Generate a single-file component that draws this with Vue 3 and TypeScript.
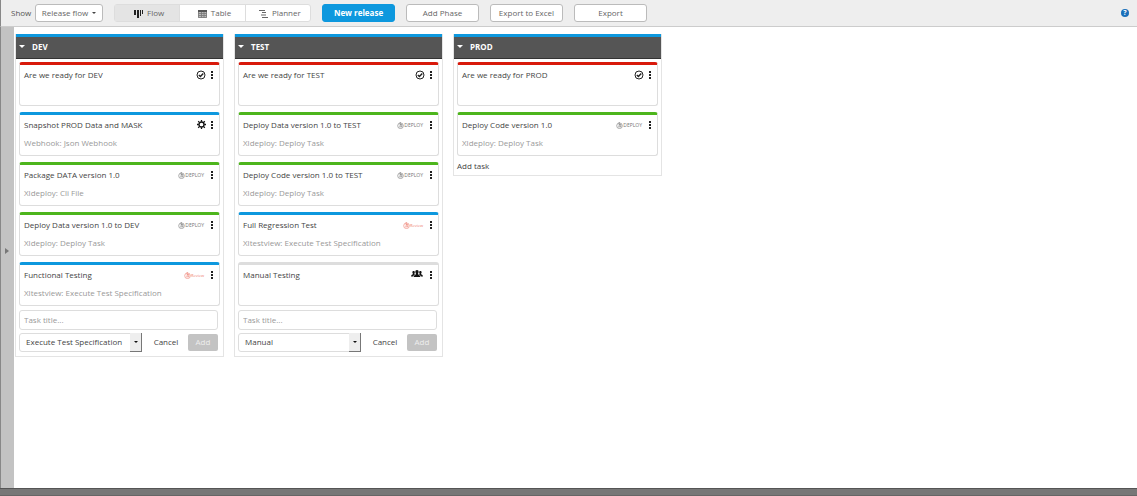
<script setup lang="ts">
import { ref } from 'vue'

type Accent = 'red' | 'blue' | 'green' | 'grey'
type Icon = 'check' | 'gear' | 'deploy' | 'review' | 'users'

interface Task {
  title: string
  type?: string
  accent: Accent
  icon: Icon
}

interface Phase {
  name: string
  tasks: Task[]
  form?: string
}

const phases: Phase[] = [
  {
    name: 'DEV',
    tasks: [
      { title: 'Are we ready for DEV', accent: 'red', icon: 'check' },
      { title: 'Snapshot PROD Data and MASK', type: 'Webhook: Json Webhook', accent: 'blue', icon: 'gear' },
      { title: 'Package DATA version 1.0', type: 'Xldeploy: Cli File', accent: 'green', icon: 'deploy' },
      { title: 'Deploy Data version 1.0 to DEV', type: 'Xldeploy: Deploy Task', accent: 'green', icon: 'deploy' },
      { title: 'Functional Testing', type: 'Xltestview: Execute Test Specification', accent: 'blue', icon: 'review' },
    ],
    form: 'Execute Test Specification',
  },
  {
    name: 'TEST',
    tasks: [
      { title: 'Are we ready for TEST', accent: 'red', icon: 'check' },
      { title: 'Deploy Data version 1.0 to TEST', type: 'Xldeploy: Deploy Task', accent: 'green', icon: 'deploy' },
      { title: 'Deploy Code version 1.0 to TEST', type: 'Xldeploy: Deploy Task', accent: 'green', icon: 'deploy' },
      { title: 'Full Regression Test', type: 'Xltestview: Execute Test Specification', accent: 'blue', icon: 'review' },
      { title: 'Manual Testing', accent: 'grey', icon: 'users' },
    ],
    form: 'Manual',
  },
  {
    name: 'PROD',
    tasks: [
      { title: 'Are we ready for PROD', accent: 'red', icon: 'check' },
      { title: 'Deploy Code version 1.0', type: 'Xldeploy: Deploy Task', accent: 'green', icon: 'deploy' },
    ],
  },
]

const taskTypes = ['Execute Test Specification', 'Manual']
const views = ['Flow', 'Table', 'Planner']
const activeView = ref('Flow')
</script>

<template>
  <div class="page">
    <header class="toolbar">
      <span class="show">Show</span>
      <button class="btn dropdown" type="button">Release flow <i class="caret"></i></button>
      <div class="views">
        <button
          v-for="view in views"
          :key="view"
          type="button"
          class="view"
          :class="{ active: view === activeView }"
          @click="activeView = view"
        >
          <svg v-if="view === 'Flow'" width="9" height="9" viewBox="0 0 9 9" aria-hidden="true">
            <path d="M0 1h2v5H0zM3 1h2v8H3zM6 1h1v6H6zM8 1h1v4H8z" fill="#222" />
          </svg>
          <svg v-else-if="view === 'Table'" width="9" height="9" viewBox="0 0 9 9" aria-hidden="true">
            <path d="M0 1h9v8H0z" fill="#bbb" />
            <path d="M.5 1.500h8v7h-8zM.5 4.500h8M.5 6.500h8M3.500 2v6.500M6 2v6.500" fill="none" stroke="#777" stroke-width=".8" />
            <path d="M0 1h9v2H0z" fill="#555" />
          </svg>
          <svg v-else width="9" height="9" viewBox="0 0 9 9" aria-hidden="true">
            <path d="M0 1.500h6M3 3.500h4M2 6h5M3 8.500h6" stroke="#666" />
          </svg>
          {{ view }}
        </button>
      </div>
      <button class="btn action primary" type="button">New release</button>
      <button class="btn action" type="button">Add Phase</button>
      <button class="btn action" type="button">Export to Excel</button>
      <button class="btn action" type="button">Export</button>
      <button class="help" type="button" aria-label="Help">?</button>
    </header>

    <div class="body">
      <aside class="rail">
        <button class="expand" type="button" aria-label="Expand panel"></button>
      </aside>
      <main class="board">
        <section v-for="phase in phases" :key="phase.name" class="phase">
          <h2 class="phase-head"><i class="fold"></i>{{ phase.name }}</h2>
          <div class="phase-body">
            <article v-for="task in phase.tasks" :key="task.title" class="task" :class="task.accent">
              <div class="task-row">
                <span class="title">{{ task.title }}</span>
                <svg v-if="task.icon === 'check'" width="10" height="10" viewBox="0 0 10 10" aria-hidden="true">
                  <circle cx="5" cy="5" r="4" fill="none" stroke="#222" />
                  <path d="M2.800 5l1.600 1.600L7.300 3.500" fill="none" stroke="#222" stroke-width="1.400" />
                </svg>
                <svg v-else-if="task.icon === 'gear'" class="gear" width="9" height="11" viewBox="0 0 9 11" aria-hidden="true">
                  <circle cx="4.500" cy="4.500" r="2.500" fill="none" stroke="#111" stroke-width="1.300" />
                  <path d="M4.500 0v1.800M4.500 7.200V9M0 4.500h1.800M7.200 4.500H9M1.200 1.200l1.400 1.400M6.400 6.400l1.400 1.400M7.800 1.200L6.400 2.600M2.600 6.400L1.200 7.800" stroke="#111" stroke-width="1.300" />
                </svg>
                <svg v-else-if="task.icon === 'users'" class="users" width="12" height="10" viewBox="0 0 12 10" aria-hidden="true">
                  <path d="M6 0c1.200 0 1.700.8 1.600 1.900C7.500 3 7 3.300 7 4c.2.900 2.200.9 2.300 3H2.700C2.800 4.900 4.800 4.900 5 4c0-.7-.5-1-.6-2.100C4.300.8 4.800 0 6 0z" fill="#111" />
                  <path d="M2.600 1c1 0 1.300.7 1.200 1.500-.1.700-.4.900-.4 1.400l.6.500C2.800 5 2.300 5.500 2.200 6.500H0c0-1.700 1.700-1.800 1.900-2.500 0-.6-.4-.8-.5-1.500C1.300 1.700 1.600 1 2.600 1zM9.400 1c-1 0-1.300.7-1.200 1.500.1.700.4.900.4 1.400l-.6.500c1.200.6 1.700 1.100 1.800 2.100H12c0-1.700-1.700-1.800-1.900-2.500 0-.6.4-.8.5-1.500.1-.8-.2-1.500-1.200-1.500z" fill="#111" />
                </svg>
                <span v-else class="brand" :class="task.icon">
                  <svg width="7" height="7" viewBox="0 0 7 7" aria-hidden="true">
                    <circle cx="3.500" cy="3.800" r="2.800" fill="none" stroke="currentColor" stroke-width=".6" />
                    <path d="M3.200 0v4M3.200 2.500h1.600v2.300H2.200" fill="none" stroke="currentColor" stroke-width=".7" />
                  </svg>{{ task.icon === 'deploy' ? 'DEPLOY' : 'Review' }}
                </span>
                <button class="menu" type="button" aria-label="Task menu"><i></i><i></i><i></i></button>
              </div>
              <p v-if="task.type" class="type">{{ task.type }}</p>
            </article>

            <form v-if="phase.form" class="add-form" @submit.prevent>
              <input type="text" placeholder="Task title..." aria-label="Task title" />
              <div class="form-row">
                <div class="select">
                  <select aria-label="Task type" :value="phase.form">
                    <option v-for="option in taskTypes" :key="option">{{ option }}</option>
                  </select>
                  <span class="arrow"></span>
                </div>
                <button class="cancel" type="button">Cancel</button>
                <button class="add" type="submit" disabled>Add</button>
              </div>
            </form>
            <button v-else class="add-task" type="button">Add task</button>
          </div>
        </section>
      </main>
    </div>
    <footer class="edge"></footer>
  </div>
</template>

<style>
body {
  margin: 0;
}
</style>

<style scoped>
.page {
  display: flex;
  flex-direction: column;
  height: 100vh;
  overflow: hidden;
  box-sizing: border-box;
  background: #fff;
  color: #444;
  font: 8px/12px "Open Sans", sans-serif;
}
.page * {
  box-sizing: border-box;
}
button,
input,
select {
  margin: 0;
  padding: 0;
  border: 0;
  background: none;
  color: inherit;
  font: inherit;
}
.toolbar {
  display: flex;
  align-items: center;
  flex: none;
  height: 27px;
  padding: 0 8px 0 10px;
  border-bottom: 1px solid #ccc;
  border-left: 1px solid #888;
  background: #eee;
}
.show {
  width: 24px;
  color: #555;
}
.btn {
  height: 18px;
  border: 1px solid #bbb;
  border-radius: 3px;
  background: #fff;
  color: #666;
  text-align: center;
}
.dropdown {
  display: flex;
  align-items: center;
  justify-content: center;
  gap: 4px;
  width: 68px;
  margin-right: 11px;
}
.caret,
.fold {
  border: 2px solid transparent;
  border-top-color: #444;
  border-bottom: 0;
}
.views {
  display: flex;
  width: 197px;
  height: 18px;
  margin-right: 11px;
  border: 1px solid #ddd;
  border-radius: 3px;
  background: #fff;
}
.view {
  display: flex;
  flex: 1;
  align-items: center;
  justify-content: center;
  gap: 4px;
  padding-left: 4px;
  color: #666;
}
.view + .view {
  border-left: 1px solid #ddd;
}
.view.active {
  background: #e4e4e4;
}
.action {
  width: 73px;
  margin-right: 11px;
}
.primary {
  border-color: #0d98de;
  background: #0d98de;
  color: #fff;
  font-weight: 700;
}
.help {
  width: 8px;
  height: 8px;
  margin-left: auto;
  border-radius: 50%;
  background: #1a6fba;
  color: #fff;
  font-size: 7px;
  font-weight: 700;
  line-height: 8px;
}
.body {
  display: flex;
  flex: 1;
  min-height: 0;
}
.rail {
  display: flex;
  align-items: center;
  flex: none;
  width: 14px;
  padding: 0 0 14px 4px;
  border-left: 1px solid #888;
  background: #c3c3c3;
}
.expand {
  border: 3px solid transparent;
  border-left: 4px solid #777;
  border-right: 0;
}
.board {
  display: flex;
  flex: 1;
  align-items: flex-start;
  gap: 10px;
  padding: 7px 1px;
}
.phase {
  width: 209px;
  border: 1px solid #e4e4e4;
  border-top: 0;
}
.phase-head {
  display: flex;
  align-items: center;
  height: 25px;
  margin: 0;
  padding: 0 0 2px 3px;
  border-top: 3px solid #0d98de;
  border-bottom: 1px solid #333;
  background: #555;
  color: #fff;
  font-size: 8px;
  font-weight: 700;
}
.fold {
  margin-right: 7px;
  border-width: 3px 3px 0;
  border-top-color: #fff;
}
.phase-body {
  padding: 3px;
}
.task {
  height: 44px;
  margin-bottom: 6px;
  padding: 4px 4px 0;
  border: 1px solid #ddd;
  border-top: 3px solid #ddd;
  border-radius: 3px;
  background: #fff;
}
.red {
  border-top-color: #d8190b;
}
.blue {
  border-top-color: #0d98de;
}
.green {
  border-top-color: #4db51c;
}
.task-row {
  display: flex;
  align-items: center;
  height: 12px;
}
.title {
  flex: 1;
  white-space: nowrap;
}
.menu {
  display: flex;
  flex-direction: column;
  align-items: center;
  gap: 1px;
  width: 6px;
  margin-left: 3px;
}
.menu i {
  width: 2px;
  height: 2px;
  background: #222;
}
.brand {
  display: flex;
  align-items: center;
  margin-right: 2px;
  color: #777;
  font: 5px/7px "Open Sans", sans-serif;
}
.review {
  color: #ee7d70;
  font-size: 4px;
}
.users {
  margin-right: 2px;
}
.type {
  margin: 6px 0 0;
  color: #999;
}
.add-form input {
  display: block;
  width: calc(100% - 2px);
  height: 20px;
  margin-top: -2px;
  padding: 0 4px 2px;
  border: 1px solid #ddd;
  border-radius: 3px;
}
.add-form input::placeholder {
  color: #999;
  opacity: 1;
}
.form-row {
  display: flex;
  align-items: center;
  height: 20px;
  margin: 2px 2px 1px 0;
}
.select {
  display: flex;
  position: relative;
  width: 123px;
  height: 19px;
}
.select select {
  width: 100%;
  padding: 0 14px 0 6px;
  appearance: none;
  border: 1px solid #ddd;
  border-radius: 3px;
}
.arrow {
  display: grid;
  place-items: center;
  position: absolute;
  top: 0;
  right: 0;
  bottom: 0;
  width: 12px;
  border-right: 1px solid #777;
  border-bottom: 1px solid #777;
  background: #eee;
  pointer-events: none;
}
.arrow::after {
  content: "";
  border: 2px solid transparent;
  border-top-color: #111;
  border-bottom: 0;
}
.cancel {
  flex: 1;
  padding-left: 2px;
}
.add {
  width: 30px;
  height: 17px;
  border-radius: 2px;
  background: #c3c3c3;
  color: #eee;
}
.add-task {
  display: block;
  height: 12px;
  margin-top: -2px;
}
.edge {
  flex: none;
  height: 8px;
  border-top: 1px solid #555;
  border-bottom: 1px solid #666;
  background: #777;
}
</style>
